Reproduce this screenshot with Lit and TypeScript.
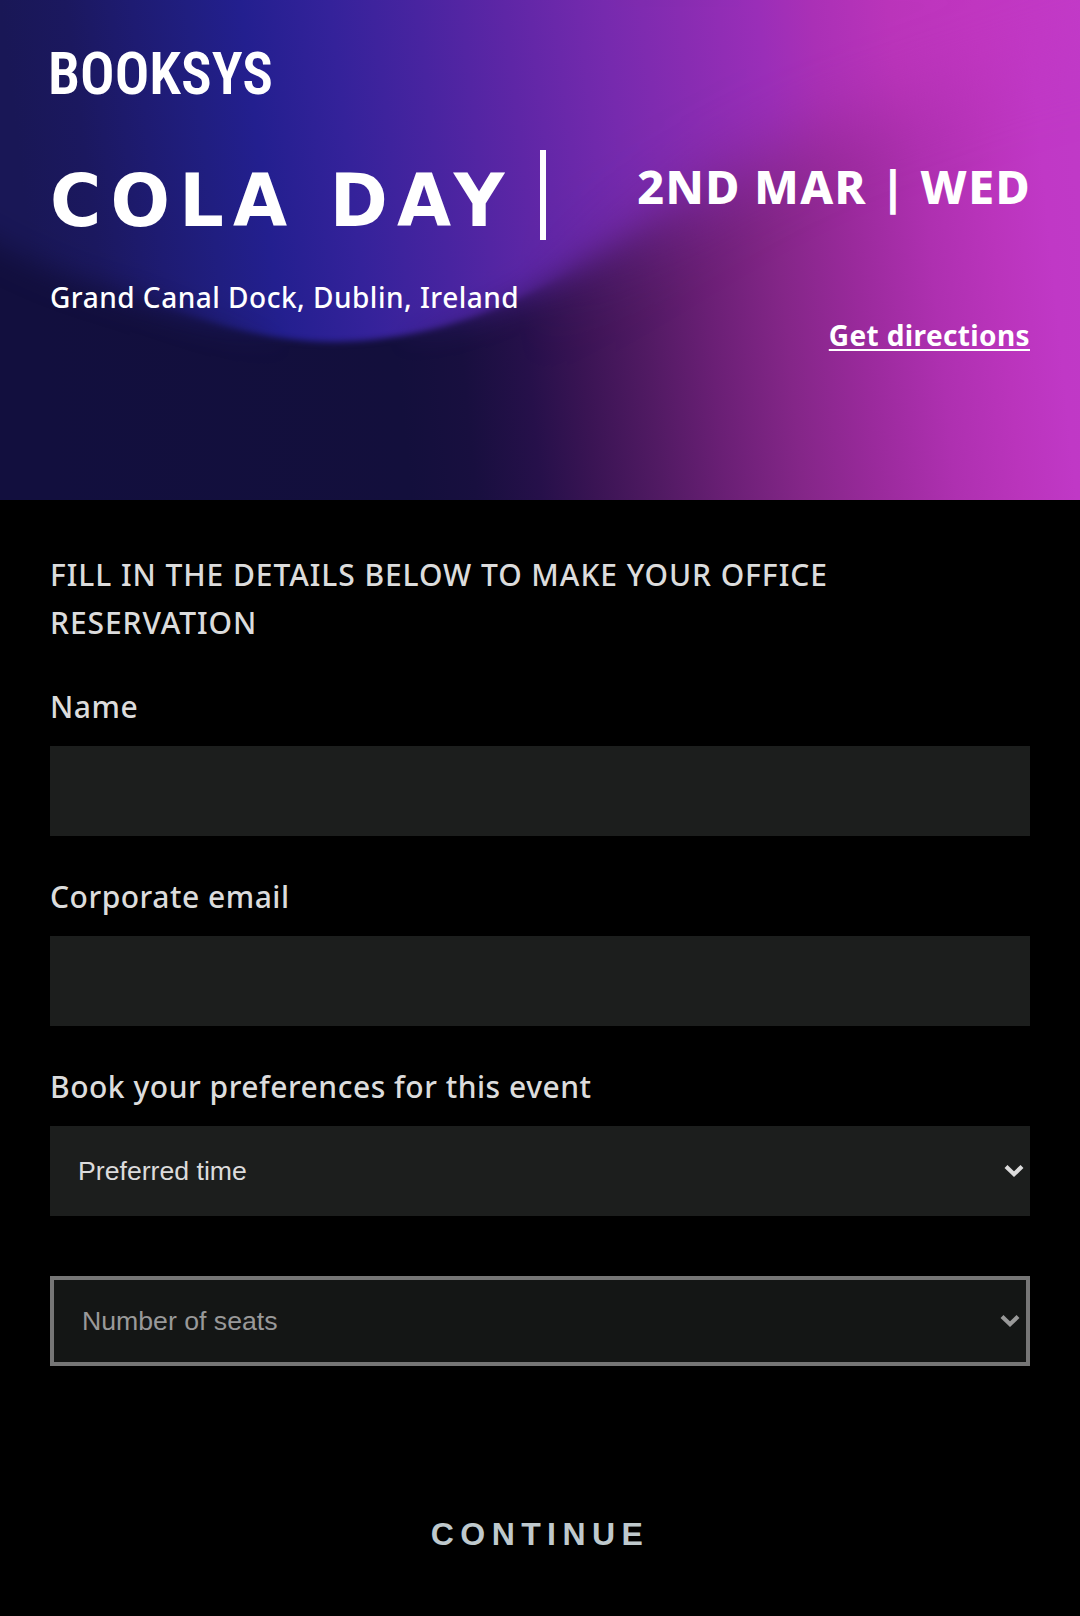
import { LitElement, html, svg, css } from "lit";
import { customElement } from "lit/decorators.js";

type Stop = [number, string];

const WAVE_STOPS: Stop[] = [
  [0, "#191756"], [6, "#1b185f"], [12, "#1e1b72"], [17, "#201e80"], [22, "#231f8f"], [30, "#34229a"],
  [38, "#4824a0"], [46, "#5e26a6"], [55, "#762aae"], [62, "#882cb2"], [69, "#9a2eb8"],
  [74, "#aa30b6"], [81, "#ba34ba"], [89, "#c036c0"], [100, "#c23ac8"],
];
const BASE_STOPS: Stop[] = [
  [0, "#120f3e"], [33, "#130f3c"], [39, "#180f3f"], [45, "#26104a"], [50, "#3a1454"], [56, "#511a63"],
  [62, "#6a1f75"], [69, "#842688"], [76, "#9a2a9c"], [83, "#ae30b0"], [89, "#ba34bc"], [94, "#c038c6"], [100, "#c03ac8"],
];

const stops = (list: Stop[]) => list.map(([o, c]) => svg`<stop offset="${o}%" stop-color=${c} />`);

@customElement("hero-backdrop")
class HeroBackdrop extends LitElement {
  static styles = css`
    :host { display: block; }
    svg { display: block; width: 100%; height: 100%; }
  `;
  render() {
    const wave = "M-120 -80V170C-40 225 20 262 100 287C190 314 250 342 335 342C430 340 500 310 560 278C640 234 720 176 830 130C930 96 1010 60 1200 20V-80Z";
    return html`<svg viewBox="0 0 1080 500" preserveAspectRatio="none" aria-hidden="true">
      <defs>
        <linearGradient id="wave" gradientUnits="userSpaceOnUse" x1="0" y1="0" x2="1080" y2="-130">${stops(WAVE_STOPS)}</linearGradient>
        <linearGradient id="base" gradientUnits="userSpaceOnUse" x1="0" y1="0" x2="1080" y2="-110">${stops(BASE_STOPS)}</linearGradient>
        <linearGradient id="crisp">
          <stop offset="12%" stop-color="#000" /><stop offset="27%" stop-color="#fff" />
          <stop offset="36%" stop-color="#fff" /><stop offset="54%" stop-color="#000" />
        </linearGradient>
        <linearGradient id="far">
          <stop offset="48%" stop-color="#000" /><stop offset="66%" stop-color="#fff" />
        </linearGradient>
        <filter id="b3" filterUnits="userSpaceOnUse" x="-200" y="-200" width="1500" height="800"><feGaussianBlur stdDeviation="3" /></filter>
        <filter id="b16" filterUnits="userSpaceOnUse" x="-200" y="-200" width="1500" height="800"><feGaussianBlur stdDeviation="15" /></filter>
        <filter id="b40" filterUnits="userSpaceOnUse" x="-200" y="-200" width="1500" height="800"><feGaussianBlur stdDeviation="36" /></filter>
        <mask id="mCrisp" maskUnits="userSpaceOnUse" x="0" y="0" width="1080" height="500"><rect width="1080" height="500" fill="url(#crisp)" /></mask>
        <mask id="mFar" maskUnits="userSpaceOnUse" x="0" y="0" width="1080" height="500"><rect width="1080" height="500" fill="url(#far)" /></mask>
        <mask id="mWave" maskUnits="userSpaceOnUse" x="0" y="0" width="1080" height="500">
          <path d=${wave} fill="#fff" filter="url(#b16)" />
          <g mask="url(#mCrisp)"><rect width="1080" height="500" fill="#000" /><path d=${wave} fill="#fff" filter="url(#b3)" /></g>
          <g mask="url(#mFar)"><rect width="1080" height="500" fill="#000" /><path d=${wave} fill="#fff" filter="url(#b40)" /></g>
        </mask>
      </defs>
      <rect width="1080" height="500" fill="url(#base)" />
      <rect width="1080" height="500" fill="url(#wave)" mask="url(#mWave)" />
    </svg>`;
  }
}

@customElement("app-root")
class AppRoot extends LitElement {
  static styles = css`
    :host {
      display: block;
      min-height: 1616px;
      background: #000;
      color: #dcdcdc;
      font-family: "Noto Sans", "Open Sans", sans-serif;
      font-weight: 500;
    }
    * { box-sizing: border-box; margin: 0; }
    .hero { position: relative; height: 500px; color: #fff; overflow: hidden; }
    .backdrop { position: absolute; inset: 0; }
    .content { position: relative; padding: 50px 50px 0; }
    .logo { display: block; width: 230px; height: 50px; overflow: visible; }
    .logo text { font: 600 59px Roboto, sans-serif; font-stretch: 75%; fill: #fff; }
    .columns { display: flex; justify-content: space-between; margin-top: 50px; }
    .title-box { width: 496px; height: 90px; border-right: 6px solid #fff; padding-top: 6px; }
    .title {
      width: max-content;
      font: 700 73.6px/90px "DejaVu Sans", sans-serif;
      letter-spacing: 9.7px;
      transform: scaleX(0.95);
      transform-origin: left;
    }
    .place { margin-top: 37px; font-size: 28px; line-height: 40px; letter-spacing: 0.5px; white-space: nowrap; }
    .side { display: flex; flex-direction: column; align-items: flex-end; padding-top: 6px; }
    .date { font-size: 46.6px; font-weight: 800; line-height: 60px; letter-spacing: 1.4px; margin-right: -1px; white-space: nowrap; }
    .directions {
      margin-top: 99px;
      font-size: 28px; font-weight: 700; line-height: 40px; letter-spacing: 0.38px;
      color: #fff; text-decoration: underline; text-decoration-thickness: 2px; text-underline-offset: 3px;
      text-decoration-skip-ink: none;
    }
    .form { padding: 51px 50px 0; font-size: 30px; line-height: 48px; letter-spacing: 0.52px; }
    .intro { font-size: inherit; font-weight: inherit; letter-spacing: 0.93px; margin-bottom: 36px; }
    .label { display: block; margin-bottom: 15px; }
    .input {
      display: block; width: 100%; height: 90px; margin-bottom: 37px;
      border: 0; border-radius: 0; background: #1c1e1d; color: inherit;
    }
    .select {
      display: flex; align-items: center; justify-content: space-between;
      height: 90px; padding: 0 6px 0 28px; background: #1c1e1d;
      font: 26.67px "Liberation Sans", Arial, sans-serif; letter-spacing: 0;
    }
    .select.disabled { margin-top: 60px; border: 4px solid #767676; background: #141615; color: #999; }
    .chevron { width: 20px; height: 14px; fill: none; stroke: currentColor; stroke-width: 4.2; }
    .continue {
      display: block; width: 100%; margin-top: 144px; padding: 0; border: 0; background: none; color: #bfc9cd;
      font: 700 32px/48px "Liberation Sans", Arial, sans-serif; letter-spacing: 6.4px;
    }
  `;

  private select(text: string, disabled = false) {
    return html`<div class="select ${disabled ? "disabled" : ""}">
      <span>${text}</span>
      <svg class="chevron" viewBox="0 0 20 14"><path d="M2 2.5L10 10.2L18 2.5" /></svg>
    </div>`;
  }

  render() {
    return html`
      <header class="hero">
        <hero-backdrop class="backdrop"></hero-backdrop>
        <div class="content">
          <svg class="logo" viewBox="0 0 230 50"><text x="-2" y="44" textLength="225" lengthAdjust="spacingAndGlyphs">BOOKSYS</text></svg>
          <div class="columns">
            <div>
              <div class="title-box"><h1 class="title">COLA DAY</h1></div>
              <p class="place">Grand Canal Dock, Dublin, Ireland</p>
            </div>
            <div class="side">
              <p class="date">2ND MAR | WED</p>
              <a class="directions">Get directions</a>
            </div>
          </div>
        </div>
      </header>
      <main class="form">
        <h2 class="intro">FILL IN THE DETAILS BELOW TO MAKE YOUR OFFICE RESERVATION</h2>
        <label class="label" for="name">Name</label>
        <input class="input" id="name" />
        <label class="label" for="email">Corporate email</label>
        <input class="input" id="email" />
        <span class="label">Book your preferences for this event</span>
        ${this.select("Preferred time")}
        ${this.select("Number of seats", true)}
        <button class="continue">CONTINUE</button>
      </main>
    `;
  }
}
